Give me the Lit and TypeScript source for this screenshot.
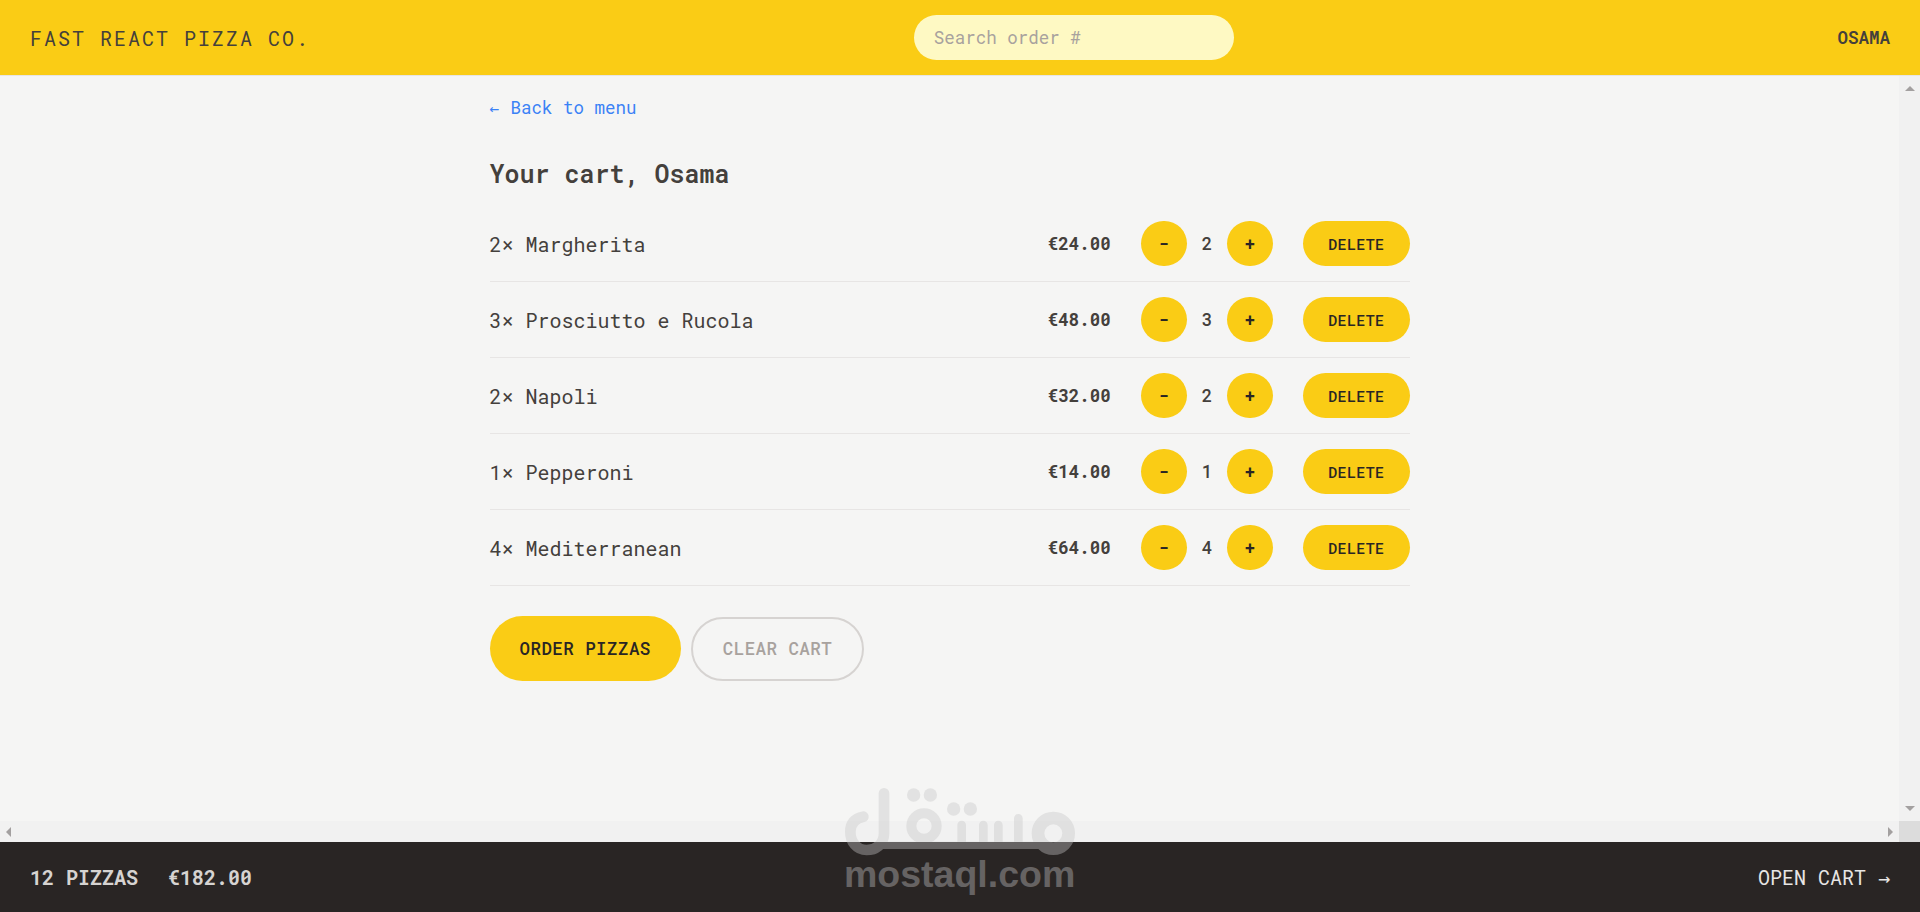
import { LitElement, html, css } from 'lit';
import { customElement } from 'lit/decorators.js';

const items = [
    { qty: 2, name: 'Margherita', price: '€24.00' },
    { qty: 3, name: 'Prosciutto e Rucola', price: '€48.00' },
    { qty: 2, name: 'Napoli', price: '€32.00' },
    { qty: 1, name: 'Pepperoni', price: '€14.00' },
    { qty: 4, name: 'Mediterranean', price: '€64.00' },
];

@customElement('app-root')
export class AppRoot extends LitElement {
    static styles = css`
        :host {
            display: grid;
            grid-template-rows: auto 1fr auto;
            height: 912px;
            position: relative;
            overflow: hidden;
            background: #f5f5f4;
            color: #44403c;
            font-family: "Roboto Mono", "Liberation Mono", monospace;
            font-size: 20px;
            line-height: 30px;
        }
        header {
            display: flex;
            align-items: center;
            justify-content: space-between;
            background: #facc15;
            padding: 15px 30px;
            border-bottom: 1px solid #e7e5e4;
        }
        .logo {
            letter-spacing: 2px;
            text-transform: uppercase;
        }
        .search {
            width: 320px;
            box-sizing: border-box;
            height: 45px;
            padding: 10px 20px;
            border: none;
            outline: none;
            border-radius: 999px;
            background: #fef9c3;
            font: inherit;
            font-size: 17.5px;
            line-height: 25px;
            color: #44403c;
        }
        .search::placeholder {
            color: #a8a29e;
        }
        .user {
            font-size: 17.5px;
            line-height: 25px;
            font-weight: 600;
            text-transform: uppercase;
        }
        .middle {
            display: grid;
            grid-template-columns: 1fr 21px;
            grid-template-rows: 1fr 21px;
            min-height: 0;
        }
        .scroller {
            min-width: 0;
        }
        .page {
            box-sizing: border-box;
            width: 960px;
            margin: 0 auto;
            padding: 15px 20px;
        }
        .back {
            color: #3b82f6;
            font-size: 17.5px;
            line-height: 25px;
            text-decoration: none;
        }
        .glyph {
            font-family: "DejaVu Sans Mono", monospace;
            line-height: 0;
        }
        .back .glyph {
            font-size: 16px;
            display: inline-block;
            width: 10.5px;
        }
        h2 {
            margin: 35px 0 0;
            font-size: 25px;
            line-height: 35px;
            font-weight: 600;
        }
        ul {
            margin: 15px 0 0;
            padding: 0;
            list-style: none;
        }
        li {
            display: flex;
            align-items: center;
            justify-content: space-between;
            padding: 15px 0;
            border-bottom: 1px solid #e7e5e4;
        }
        .name {
            margin: 0;
        }
        .right {
            display: flex;
            align-items: center;
            gap: 30px;
        }
        .price {
            font-size: 17.5px;
            line-height: 25px;
            font-weight: 700;
        }
        .update {
            display: flex;
            align-items: center;
            gap: 15px;
        }
        .qty {
            font-size: 17.5px;
            line-height: 25px;
            font-weight: 500;
        }
        button {
            display: inline-block;
            appearance: none;
            border: none;
            border-radius: 999px;
            background: #facc15;
            color: #292524;
            font-family: inherit;
            font-weight: 500;
            text-transform: uppercase;
            letter-spacing: 0.025em;
        }
        .round {
            width: 46px;
            padding: 10px 0;
            font-size: 17.5px;
            line-height: 25px;
            font-weight: 600;
        }
        .delete {
            padding: 12.5px 25px;
            font-size: 15px;
            line-height: 20px;
        }
        .actions {
            display: flex;
            align-items: center;
            gap: 10px;
            margin-top: 30px;
        }
        .primary {
            padding: 20px 30px;
            font-size: 17.5px;
            line-height: 25px;
        }
        .secondary {
            padding: 17.5px 30px;
            font-size: 17.5px;
            line-height: 25px;
            background: transparent;
            border: 2px solid #d6d3d1;
            color: #a8a29e;
        }
        .vbar,
        .hbar {
            display: flex;
            align-items: center;
            justify-content: space-between;
            background: #f1f1f1;
        }
        .vbar {
            flex-direction: column;
            padding: 10px 0;
        }
        .hbar {
            padding: 0 6px;
        }
        .corner {
            background: #dcdcdc;
        }
        .arrow {
            width: 0;
            height: 0;
            border-style: solid;
            border-color: transparent;
        }
        .up {
            border-width: 0 5px 5px;
            border-bottom-color: #a3a0a0;
        }
        .down {
            border-width: 5px 5px 0;
            border-top-color: #a3a0a0;
        }
        .left {
            border-width: 5px 5px 5px 0;
            border-right-color: #a3a0a0;
        }
        .rightward {
            border-width: 5px 0 5px 5px;
            border-left-color: #a3a0a0;
        }
        footer {
            display: flex;
            align-items: center;
            justify-content: space-between;
            background: #292524;
            color: #e7e5e4;
            padding: 20px 30px;
            text-transform: uppercase;
        }
        .summary {
            display: flex;
            gap: 30px;
            font-weight: 700;
            color: #d6d3d1;
        }
        .watermark {
            position: absolute;
            left: 780px;
            top: 770px;
            width: 340px;
            height: 142px;
            opacity: 0.39;
            pointer-events: none;
        }
        .watermark svg {
            display: block;
        }
        .watermark span {
            position: absolute;
            left: 64px;
            top: 82px;
            font-family: "Liberation Sans", sans-serif;
            font-size: 37.5px;
            line-height: 44px;
            font-weight: 700;
            color: #c6c6c6;
            white-space: nowrap;
        }
    `;

    render() {
        return html`
        <header>
            <div class="logo">Fast React Pizza Co.</div>
            <input class="search" placeholder="Search order #" />
            <div class="user">Osama</div>
        </header>
        <div class="middle">
            <div class="scroller">
                <div class="page">
                    <a class="back" href="#"><span class="glyph">←</span> Back to menu</a>
                    <h2>Your cart, Osama</h2>
                    <ul>
                        ${items.map((item) => html`
                        <li>
                            <p class="name">${item.qty}× ${item.name}</p>
                            <div class="right">
                                <span class="price">${item.price}</span>
                                <div class="update">
                                    <button class="round">-</button>
                                    <span class="qty">${item.qty}</span>
                                    <button class="round">+</button>
                                </div>
                                <button class="delete">Delete</button>
                            </div>
                        </li>
                        `)}
                    </ul>
                    <div class="actions">
                        <button class="primary">Order pizzas</button>
                        <button class="secondary">Clear cart</button>
                    </div>
                </div>
            </div>
            <div class="vbar"><i class="arrow up"></i><i class="arrow down"></i></div>
            <div class="hbar"><i class="arrow left"></i><i class="arrow rightward"></i></div>
            <div class="corner"></div>
        </div>
        <footer>
            <div class="summary"><span>12 pizzas</span><span>€182.00</span></div>
            <div>Open cart <span class="glyph">→</span></div>
        </footer>
        <div class="watermark">
            <svg width="340" height="142" viewBox="0 0 1020 426" fill="none" stroke="#c6c6c6" stroke-width="32" stroke-linecap="round" stroke-linejoin="round">
                <path d="M312 70 V190 C312 225 285 240 260 240 C230 240 211 215 211 185 C211 160 225 145 250 140" />
                <path d="M290 226 H790" stroke-width="22" />
                <circle cx="432" cy="168" r="38" stroke-width="30" />
                <path d="M545 165 V215 M610 165 V215 M655 165 V215 M715 145 V215" stroke-width="26" />
                <circle cx="820" cy="190" r="46" stroke-width="38" />
                <g fill="#c6c6c6" stroke="none">
                    <circle cx="401" cy="75" r="20" />
                    <circle cx="451" cy="75" r="20" />
                    <circle cx="521" cy="117" r="20" />
                    <circle cx="571" cy="117" r="20" />
                </g>
            </svg>
            <span>mostaql.com</span>
        </div>
        `;
    }
}

declare global {
    interface HTMLElementTagNameMap {
        'app-root': AppRoot;
    }
}
